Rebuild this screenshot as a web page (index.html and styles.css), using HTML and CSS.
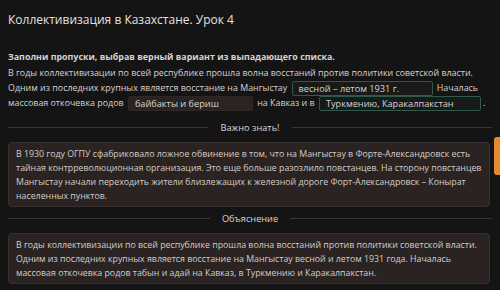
FILE: index.html
```html
<!DOCTYPE html>
<html lang="ru">

<head>
    <meta charset="UTF-8">
    <meta name="viewport" content="width=device-width, initial-scale=1.0">
    <title>Коллективизация в Казахстане. Урок 4</title>
    <link rel="stylesheet" href="styles.css">
</head>

<body>
    <h1 class="lesson-title">Коллективизация в Казахстане. Урок 4</h1>

    <div class="task">
        <p class="task-question">Заполни пропуски, выбрав верный вариант из выпадающего списка.</p>
        <div class="task-text">
            В годы коллективизации по всей республике прошла волна восстаний против политики советской власти.<br>
            Одним из последних крупных является восстание на Мангыстау
            <span class="gap correct">весной – летом 1931 г.</span>
            Началась<br>
            массовая откочевка родов
            <span class="gap plain">байбакты и бериш</span>
            на Кавказ и в
            <span class="gap correct wide">Туркмению, Каракалпакстан</span>.
        </div>
    </div>

    <!-- Hint block -->
    <div class="divider"><span>Важно знать!</span></div>
    <div class="note">
        В 1930 году ОГПУ сфабриковало ложное обвинение в том, что на Мангыстау в Форте-Александровск есть
        тайная контрреволюционная организация. Это еще больше разозлило повстанцев. На сторону повстанцев
        Мангыстау начали переходить жители близлежащих к железной дороге Форт-Александровск – Конырат
        населенных пунктов.
    </div>

    <!-- Explanation block -->
    <div class="divider"><span>Объяснение</span></div>
    <div class="note">
        В годы коллективизации по всей республике прошла волна восстаний против политики советской власти.
        Одним из последних крупных является восстание на Мангыстау весной и летом 1931 года. Началась
        массовая откочевка родов табын и адай на Кавказ, в Туркмению и Каракалпакстан.
    </div>

    <div class="side-tab"></div>
</body>

</html>
```

FILE: styles.css
```css
body {
    font-family: "Open Sans", "Noto Sans", sans-serif;
    background-color: #151414;
    color: #d6d3d1;
    margin: 0;
    padding: 0 8px;
    overflow: hidden;
}

.lesson-title {
    font-size: 12px;
    font-weight: normal;
    color: #e4e2e0;
    margin: 0;
    padding: 11px 0 21px;
    line-height: 18px;
}

.task-question {
    font-size: 8.9px;
    font-weight: bold;
    margin: 0;
    line-height: 14px;
}

.task-text {
    font-size: 8.9px;
    line-height: 14.5px;
    margin-top: 2px;
    white-space: nowrap;
}

.gap {
    display: inline-block;
    box-sizing: border-box;
    height: 15px;
    line-height: 13px;
    padding: 0 6px;
    border: 1px solid transparent;
    border-radius: 2px;
    vertical-align: middle;
    margin: 0 2px;
    font-size: 9.2px;
}

.gap.correct {
    width: 141px;
    border-color: #2e5a4b;
    background-color: #181a19;
}

.gap.correct.wide {
    width: 162px;
}

.gap.plain {
    width: 125px;
    border-color: #2e2726;
    background-color: #2a2321;
}

.divider {
    display: flex;
    align-items: center;
    gap: 12px;
    font-size: 9.2px;
    line-height: 14px;
    color: #d8d6d4;
    margin: 5px 0 7px;
}

.task + .divider {
    margin-top: 10px;
}

.divider::before,
.divider::after {
    content: "";
    flex: 1;
    height: 1px;
    background-color: #3a3634;
}

.note {
    background-color: #2a2321;
    border: 1px solid #3a312e;
    border-radius: 4px;
    padding: 4px 7px 3px;
    font-size: 8.8px;
    line-height: 14px;
    color: #d2cecb;
    margin-right: 2px;
}

.side-tab {
    position: absolute;
    right: 0;
    top: 137px;
    width: 6px;
    height: 38px;
    background-color: #e8892c;
    border-radius: 3px 0 0 3px;
}
```
